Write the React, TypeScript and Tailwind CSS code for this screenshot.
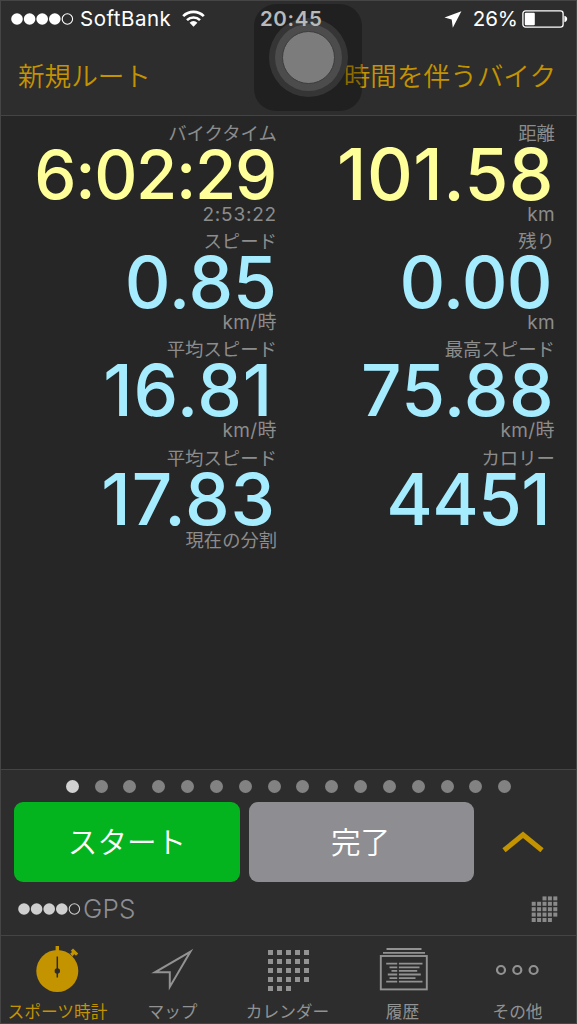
import type { ReactNode } from "react";

type Metric = {
  label: string;
  value: string;
  unit?: string;
  valueClass: string;
  unitClass?: string;
};

const metrics: Metric[] = [
  {
    label: "バイクタイム",
    value: "6:02:29",
    unit: "2:53:22",
    valueClass: "text-[#ffff99] text-[67px] tracking-[-1.3px] pt-[1px] mr-[1px]",
    unitClass: "text-[19px] tracking-[0.8px]",
  },
  {
    label: "距離",
    value: "101.58",
    unit: "km",
    valueClass: "text-[#ffff99] text-[71px] tracking-[0.5px] mr-[1px]",
  },
  { label: "スピード", value: "0.85", unit: "km/時", valueClass: "text-[#a5ecff] text-[71px]" },
  {
    label: "残り",
    value: "0.00",
    unit: "km",
    valueClass: "text-[#a5ecff] text-[71px] tracking-[-0.7px] mr-[3px]",
  },
  {
    label: "平均スピード",
    value: "16.81",
    unit: "km/時",
    valueClass: "text-[#a5ecff] text-[71px] tracking-[0.8px] mr-[4px]",
  },
  {
    label: "最高スピード",
    value: "75.88",
    unit: "km/時",
    valueClass: "text-[#a5ecff] text-[71px] tracking-[0.4px] mr-[1px]",
  },
  {
    label: "平均スピード",
    value: "17.83",
    unit: "現在の分割",
    valueClass: "text-[#a5ecff] text-[71px] tracking-[0.9px] mr-[1px]",
    unitClass: "text-[18.3px]",
  },
  {
    label: "カロリー",
    value: "4451",
    valueClass: "text-[#a5ecff] text-[71px] tracking-[-0.7px] mr-[5px]",
  },
];

const SignalDots = ({ className }: { className: string }) => (
  <svg width="63" height="14" viewBox="0 0 63 14" className={className}>
    {[6, 18.6, 31.2, 43.8].map((x) => (
      <circle key={x} cx={x} cy="7" r="5.8" fill="currentColor" />
    ))}
    <circle cx="56.4" cy="7" r="5.2" fill="none" stroke="currentColor" strokeWidth="1.1" />
  </svg>
);

const StatusBar = () => (
  <div className="flex h-[36px] items-center pl-[10px] pr-[8px] text-[20.5px] leading-[36px] text-white">
    <SignalDots className="text-white" />
    <span className="ml-[6px] w-[94px] tracking-[0.5px]">SoftBank</span>
    <svg width="23" height="17" viewBox="0 0 23 17" className="ml-[8px] -mt-[2px]">
      <path d="M1.2 6.1a14.7 14.7 0 0 1 20.6 0" fill="none" stroke="#fff" strokeWidth="2.7" />
      <path d="M5 10.1a9.3 9.3 0 0 1 13 0" fill="none" stroke="#fff" strokeWidth="2.6" />
      <path d="M11.5 16.8 7.6 12.7a5.6 5.6 0 0 1 7.8 0Z" fill="#fff" />
    </svg>
    <span className="relative z-10 ml-[55px] font-semibold tracking-[0.6px] text-[#b9b9b9]">20:45</span>
    <div className="ml-auto flex items-center">
      <svg width="18" height="17" viewBox="0 0 18 17">
        <path d="M.5 6.6 17.4.2 8.8 16.8 7.7 8.6Z" fill="#fff" />
      </svg>
      <span className="ml-[11px] mr-[4px]">26%</span>
      <svg width="46" height="18" viewBox="0 0 46 18">
        <rect x=".9" y=".9" width="40.2" height="16.2" rx="2.6" fill="none" stroke="#fff" strokeWidth="1.3" />
        <rect x="2.8" y="2.8" width="10" height="12.4" rx="1" fill="#fff" />
        <path d="M42.4 5.8c1.7.4 2.8 1.6 2.8 3.2s-1.1 2.8-2.8 3.2Z" fill="#fff" />
      </svg>
    </div>
  </div>
);

// floating AssistiveTouch button
const AssistiveTouch = () => (
  <div className="absolute left-[253px] top-[3px] flex h-[107px] w-[108px] items-center justify-center rounded-[22px] bg-black/28">
    <div className="flex h-[79px] w-[79px] items-center justify-center rounded-full bg-[#353535]">
      <div className="flex h-[67px] w-[67px] items-center justify-center rounded-full bg-[#4c4c4c]">
        <div className="h-[53px] w-[53px] rounded-full border border-[#3c3c3c] bg-[#7c7c7c]" />
      </div>
    </div>
  </div>
);

const MetricCell = ({ label, value, unit, valueClass, unitClass = "text-[19px] tracking-[0.4px]" }: Metric) => (
  <div className="flex h-[108.2px] flex-col items-end whitespace-nowrap text-[#8c8c8c]">
    <div className="h-[17px] text-[18.4px] leading-[17px]">{label}</div>
    <div className={`h-[64px] font-medium leading-[64px] ${valueClass}`}>{value}</div>
    <div className={`h-[17px] leading-[18px] ${unitClass}`}>{unit}</div>
  </div>
);

const gpsGrid = ["00111", "11111", "11111", "11111", "11110"];

const StopwatchIcon = () => (
  <svg width="44" height="48" viewBox="0 0 44 48">
    <circle cx="21.3" cy="26" r="21" fill="#c49300" />
    <path d="M21.3 1v6" stroke="#c49300" strokeWidth="3.4" />
    <path d="m35.3 10 3.4-3.4M35.9 4.6l5.2 5" stroke="#c49300" strokeWidth="3.2" />
    <path d="M21.3 11.5v21" stroke="#2d2d2d" strokeWidth="1.5" />
    <circle cx="21.3" cy="26" r="2.7" fill="#2d2d2d" />
  </svg>
);

const MapIcon = () => (
  <svg width="44" height="48" viewBox="0 0 44 48">
    <path d="M39.5 6.6 3.9 27.3h14.9v14.6Z" fill="none" stroke="#929292" strokeWidth="2" />
  </svg>
);

const CalendarIcon = () => (
  <svg width="44" height="48" viewBox="0 0 44 48">
    {Array.from({ length: 23 }, (_, i) => (
      <rect key={i} x={2 + (i % 5) * 9} y={5 + Math.floor(i / 5) * 9} width="5" height="5" fill="#929292" />
    ))}
  </svg>
);

const historyLines = [
  [8.7, 45],
  [12, 42],
  [14, 39.7],
  [10.3, 43.3],
  [12, 38],
  [8.7, 45],
];

const HistoryIcon = () => (
  <svg width="50" height="48" viewBox="0 0 50 48" fill="none" stroke="#929292">
    <path d="M8.5 4h35M5 7.8h42" strokeWidth="1.8" />
    <rect x="2.8" y="11" width="46" height="33.4" strokeWidth="1.9" />
    {historyLines.map(([from, to], i) => (
      <path key={i} d={`M${from - 0.5} ${18.7 + i * 3.6}H19.2M20.9 ${18.7 + i * 3.6}H${to - 0.5}`} strokeWidth="1.8" />
    ))}
  </svg>
);

const MoreIcon = () => (
  <svg width="44" height="48" viewBox="0 0 44 48" fill="none" stroke="#929292" strokeWidth="2.2">
    <circle cx="5" cy="25" r="4" />
    <circle cx="21.3" cy="25" r="4" />
    <circle cx="37.6" cy="25" r="4" />
  </svg>
);

const Tab = ({ icon, label, active }: { icon: ReactNode; label: string; active?: boolean }) => (
  <div className="flex flex-1 flex-col items-center pt-[9px]">
    {icon}
    <span
      className={`mt-[9px] whitespace-nowrap text-[16.7px] leading-[20px] ${active ? "text-[#c49300]" : "text-[#929292]"}`}
    >
      {label}
    </span>
  </div>
);

export default function App() {
  return (
    <div className="relative flex h-[1024px] w-[577px] flex-col overflow-hidden border border-[#454545] bg-[#262626] font-['Inter','Noto_Sans_CJK_JP',sans-serif]">
      <header className="h-[115px] border-b border-[#444] bg-[#2d2d2d]">
        <StatusBar />
        <div className="flex items-center justify-between pl-[17px] pr-[20px] pt-[19px] text-[26.6px] font-[350] leading-[40px] text-[#c49300]">
          <span>新規ルート</span>
          <span>時間を伴うバイク</span>
        </div>
      </header>
      <AssistiveTouch />

      <main className="grid flex-1 grid-cols-[276px_278px] content-start pt-[9px]">
        {metrics.map((m, i) => (
          <MetricCell key={i} {...m} />
        ))}
      </main>

      <section className="h-[166px] border-t border-[#444] bg-[#2d2d2d]">
        <div className="flex justify-center gap-[15.85px] pt-[10px]">
          {Array.from({ length: 16 }, (_, i) => (
            <span key={i} className={`h-[13px] w-[13px] rounded-full ${i === 0 ? "bg-[#d2d2d2]" : "bg-[#828282]"}`} />
          ))}
        </div>
        <div className="mt-[9px] flex items-center pl-[13px] text-[29.6px] font-[350] text-white">
          <button className="h-[80px] w-[226px] rounded-[9px] bg-[#03b41f] pt-[1px]">スタート</button>
          <button className="ml-[9px] h-[80px] w-[225px] rounded-[9px] bg-[#8e8d92] pr-[2px] pt-[1px]">完了</button>
          <svg width="42" height="24" viewBox="0 0 42 24" className="ml-[28px]">
            <path d="M2 20.3 21 4.8l19 15.5" fill="none" stroke="#c49300" strokeWidth="5" />
          </svg>
        </div>
        <div className="flex items-center pl-[17px] pr-[17px] pt-[7px]">
          <SignalDots className="text-[#cfcfcf]" />
          <span className="ml-[2px] text-[26px] font-[350] leading-[40px] tracking-[0.2px] text-[#8e8d92]">GPS</span>
          <svg width="28" height="27" viewBox="0 0 28 27" className="ml-auto">
            {gpsGrid.map((row, y) =>
              row
                .split("")
                .map((on, x) =>
                  on === "1" ? (
                    <rect key={`${x}-${y}`} x={0.7 + x * 5.4} y={0.4 + y * 5.4} width="4" height="4" fill="#8a8a8a" />
                  ) : null
                )
            )}
          </svg>
        </div>
      </section>

      <nav className="-ml-px flex h-[88px] border-t border-[#444] bg-[#2d2d2d] pr-px">
        <Tab icon={<StopwatchIcon />} label="スポーツ時計" active />
        <Tab icon={<MapIcon />} label="マップ" />
        <Tab icon={<CalendarIcon />} label="カレンダー" />
        <Tab icon={<HistoryIcon />} label="履歴" />
        <Tab icon={<MoreIcon />} label="その他" />
      </nav>
    </div>
  );
}
